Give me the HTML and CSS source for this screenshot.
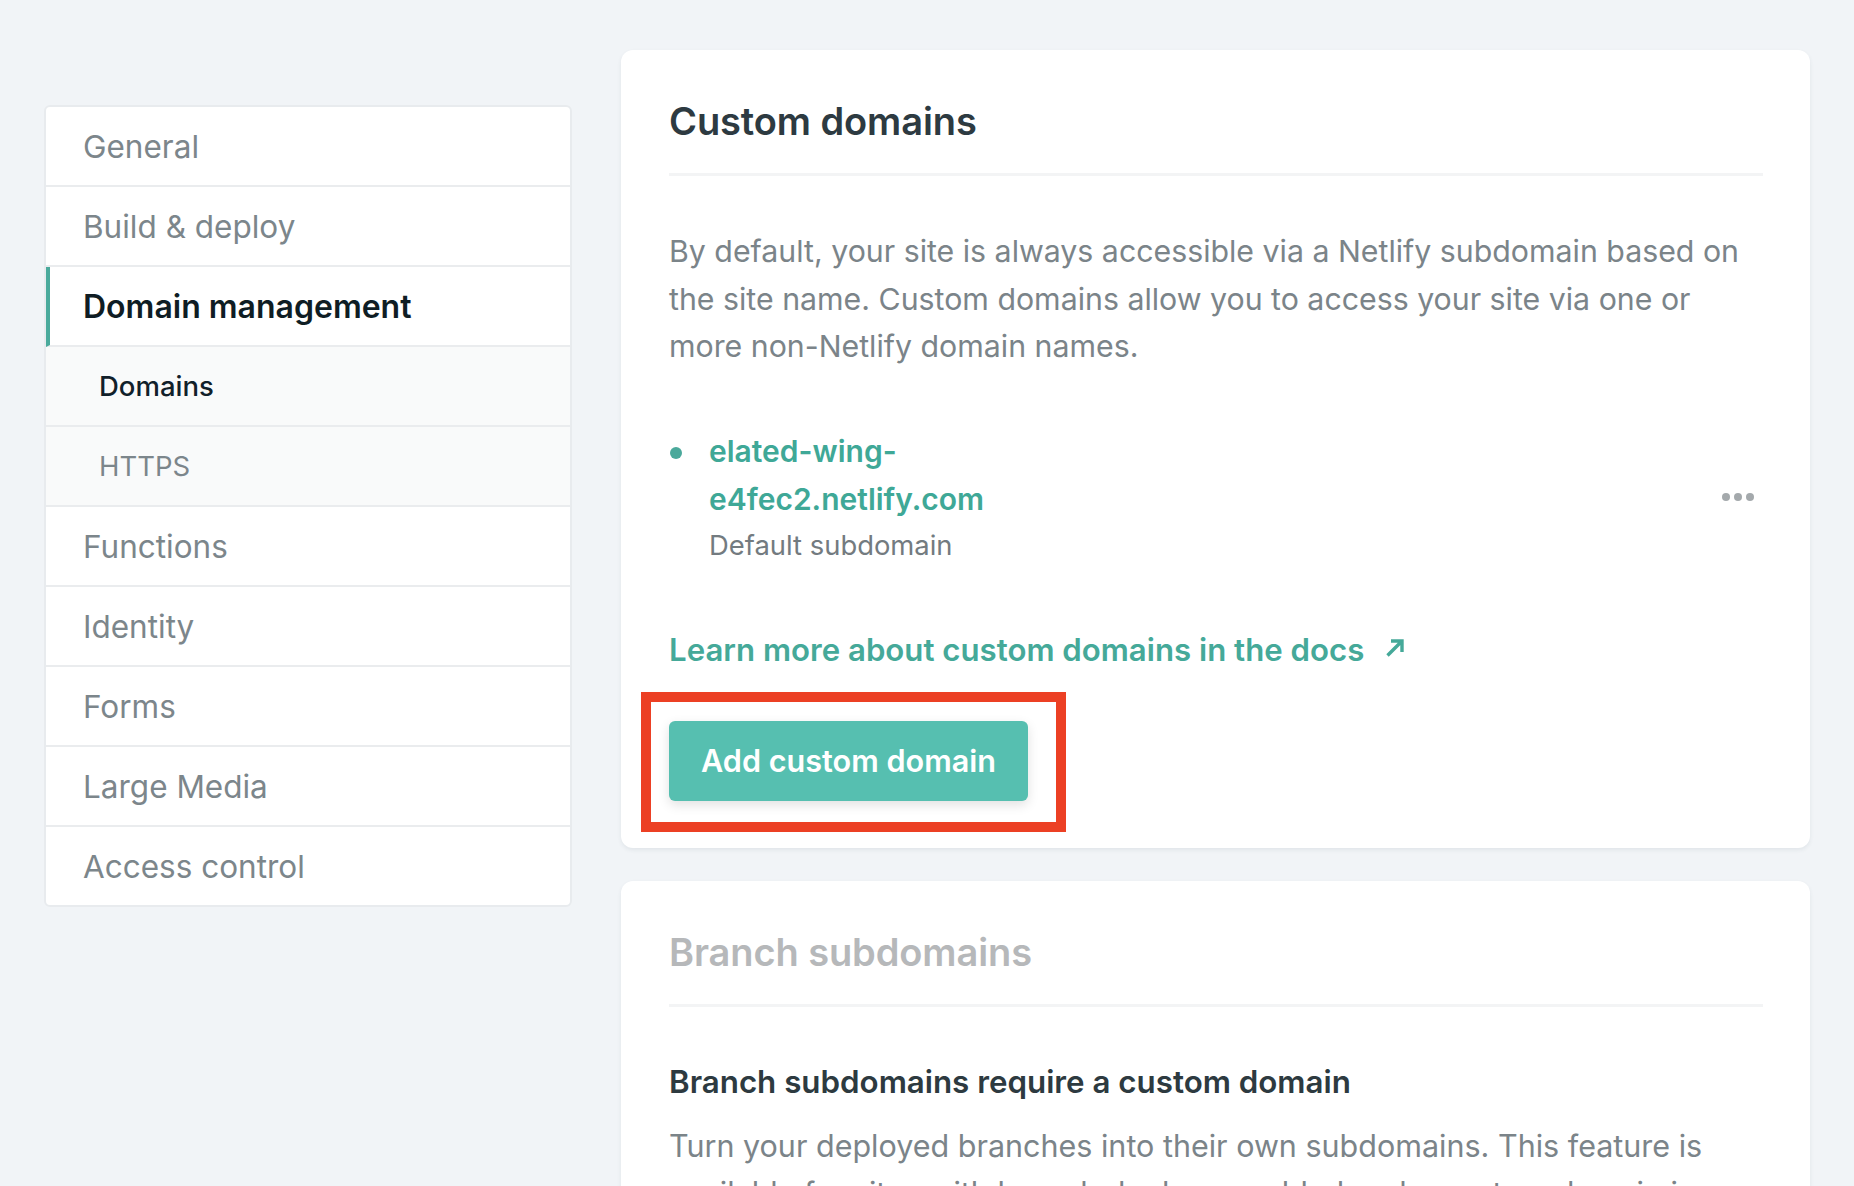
FILE: index.html
```html
<!DOCTYPE html>
<html lang="en">
<head>
<meta charset="utf-8">
<title>Domain management</title>
<link rel="stylesheet" href="styles.css">
</head>
<body>
<div class="page">
  <nav class="sidenav">
    <a class="nav-item">General</a>
    <a class="nav-item">Build &amp; deploy</a>
    <a class="nav-item active">Domain management</a>
    <a class="nav-item sub current">Domains</a>
    <a class="nav-item sub">HTTPS</a>
    <a class="nav-item">Functions</a>
    <a class="nav-item">Identity</a>
    <a class="nav-item">Forms</a>
    <a class="nav-item">Large Media</a>
    <a class="nav-item last">Access control</a>
  </nav>
  <main class="content">
    <section class="card">
      <h2 class="card-title">Custom domains</h2>
      <p class="lead">By default, your site is always accessible via a Netlify subdomain based on the site name. Custom domains allow you to access your site via one or more non-Netlify domain names.</p>
      <ul class="domain-list">
        <li class="domain-row">
          <span class="dot"></span>
          <div class="domain-info">
            <a class="domain-name">elated-wing-e4fec2.netlify.com</a>
            <div class="domain-meta">Default subdomain</div>
          </div>
          <button class="more" aria-label="Options"><span></span><span></span><span></span></button>
        </li>
      </ul>
      <a class="docs-link">Learn more about custom domains in the docs
        <svg class="ext" width="18" height="18" viewBox="0 0 18 18" aria-hidden="true"><path d="M1.5 16.5 L16 2 M5 2 H16 V13" fill="none" stroke="currentColor" stroke-width="3.4"/></svg>
      </a>
      <div class="action">
        <button class="btn-primary">Add custom domain</button>
        <span class="highlight"></span>
      </div>
    </section>
    <section class="card">
      <h2 class="card-title muted">Branch subdomains</h2>
      <h3 class="sub-heading">Branch subdomains require a custom domain</h3>
      <p class="lead tight">Turn your deployed branches into their own subdomains. This feature is available for sites with branch deploys enabled and a custom domain in use.</p>
    </section>
  </main>
</div>
</body>
</html>
```

FILE: styles.css
```css
html, body {
  margin: 0;
  padding: 0;
  height: 100%;
  overflow: hidden;
}
body {
  background: #f1f4f7;
  font-family: Inter, "Noto Sans", "Liberation Sans", sans-serif;
  color: #2e3a40;
}
.page {
  display: flex;
  align-items: flex-start;
  gap: 49px;
  padding: 50px 44px 0 44px;
}
.sidenav {
  flex: 0 0 528px;
  box-sizing: border-box;
  margin-top: 55px;
  display: flex;
  flex-direction: column;
  background: #fff;
  border: 2px solid #e8ebee;
  border-radius: 6px;
  overflow: hidden;
}
.nav-item {
  display: flex;
  align-items: center;
  height: 78px;
  padding-left: 37px;
  border-bottom: 2px solid #eaecee;
  font-size: 31.5px;
  color: #7c868b;
  text-decoration: none;
}
.nav-item.last {
  border-bottom: 0;
}
.nav-item.active {
  border-left: 4px solid #4aaa9c;
  padding-left: 33px;
  font-size: 32px;
  font-weight: 600;
  color: #0f1d24;
}
.nav-item.sub {
  background: #f9fafa;
  padding-left: 53px;
  font-size: 27.5px;
}
.nav-item.sub.current {
  color: #11202a;
  font-weight: 500;
}
.content {
  flex: 1 1 auto;
  display: flex;
  flex-direction: column;
  gap: 33px;
}
.card {
  background: #fff;
  border-radius: 12px;
  padding: 48px 47px 47px 48px;
  box-shadow: 0 2px 4px rgba(40, 60, 80, 0.08);
}
.card-title {
  margin: 0;
  font-size: 38px;
  line-height: 46px;
  font-weight: 600;
  color: #2d3a41;
  padding-bottom: 29px;
  border-bottom: 3px solid #f3f4f5;
  letter-spacing: -0.1px;
}
.card-title.muted {
  color: #b6b8ba;
}
.lead {
  margin: 52px 0 0;
  font-size: 30.3px;
  line-height: 47.5px;
  color: #7b8489;
}
.lead.tight {
  margin-top: 17px;
  font-size: 30.5px;
}
.domain-list {
  list-style: none;
  margin: 56px 0 0;
  padding: 0;
}
.domain-row {
  display: flex;
  align-items: center;
}
.dot {
  align-self: flex-start;
  flex: 0 0 12px;
  height: 12px;
  margin: 20px 27px 0 1px;
  border-radius: 50%;
  background: #4aa99b;
}
.domain-info {
  width: 310px;
  display: flex;
  flex-direction: column;
}
.domain-name {
  font-size: 30px;
  line-height: 48px;
  font-weight: 600;
  color: #3fa897;
  text-decoration: none;
}
.domain-meta {
  font-size: 27.4px;
  line-height: 44px;
  color: #737b80;
}
.more {
  margin-left: auto;
  margin-right: 9px;
  display: flex;
  gap: 4px;
  padding: 0;
  border: 0;
  background: none;
}
.more span {
  width: 8px;
  height: 8px;
  border-radius: 50%;
  background: #a4a9ac;
}
.docs-link {
  display: flex;
  align-items: center;
  gap: 22px;
  margin-top: 61px;
  font-size: 31.2px;
  line-height: 44px;
  font-weight: 600;
  color: #45a999;
  text-decoration: none;
}
.ext {
  flex: 0 0 18px;
  margin-top: -3px;
}
.action {
  position: relative;
  align-self: flex-start;
  width: max-content;
  margin-top: 49px;
}
.btn-primary {
  display: block;
  height: 80px;
  padding: 0 32px;
  border: 0;
  border-radius: 6px;
  background: #56bfb0;
  color: #fff;
  font-family: inherit;
  font-size: 30.6px;
  font-weight: 600;
  box-shadow: 0 4px 12px rgba(0, 0, 0, 0.12);
}
.highlight {
  position: absolute;
  top: -29px;
  left: -28px;
  right: -38px;
  bottom: -31px;
  border: 10px solid #ec4024;
  pointer-events: none;
}
.sub-heading {
  margin: 53px 0 0;
  font-size: 31.3px;
  line-height: 45px;
  font-weight: 600;
  color: #2d3a40;
}
```
